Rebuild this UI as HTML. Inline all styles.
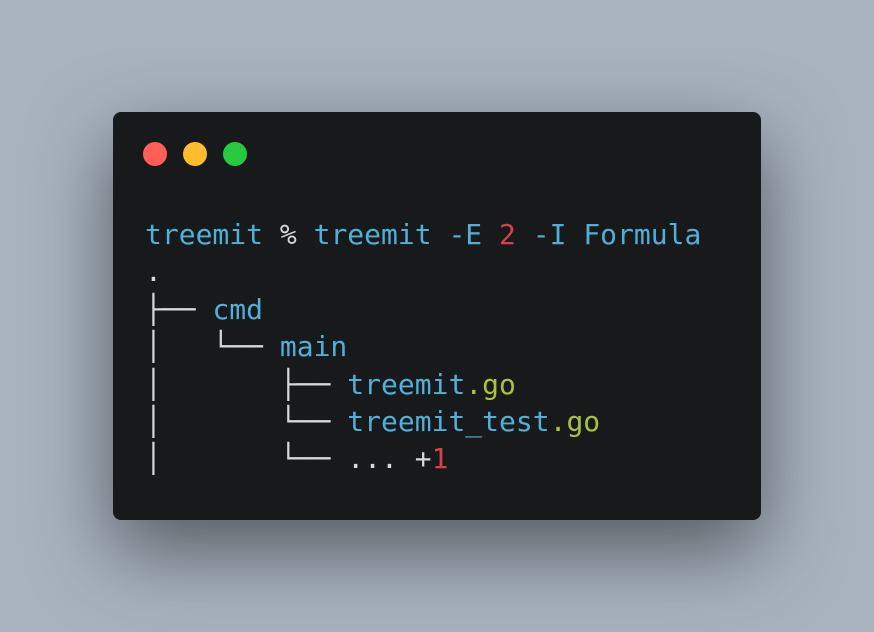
<!DOCTYPE html>
<html><head><style>
html,body{margin:0;padding:0;width:874px;height:632px;overflow:hidden;background:#a8b3bf}
.card{position:absolute;left:113px;top:112px;width:648px;height:408px;background:#18191b;border-radius:8px;box-shadow:0 30px 80px rgba(0,0,0,0.5)}
.dot{position:absolute;top:30px;width:24px;height:24px;border-radius:50%}
pre{position:absolute;left:32px;top:104px;margin:0;font-family:"DejaVu Sans Mono","Liberation Mono",monospace;font-size:28px;line-height:37.4px;color:#d8d8d8}
.b{color:#4fb0d8}.r{color:#d9414a}.g{color:#a8c23f}
</style></head><body>
<div class="card">
<div class="dot" style="left:30px;background:#ff5f56"></div>
<div class="dot" style="left:70px;background:#ffbd2e"></div>
<div class="dot" style="left:110px;background:#27c93f"></div>
<pre><span class="b">treemit</span> % <span class="b">treemit -E</span> <span class="r">2</span> <span class="b">-I Formula</span>
.
├── <span class="b">cmd</span>
│   └── <span class="b">main</span>
│       ├── <span class="b">treemit</span><span class="g">.go</span>
│       └── <span class="b">treemit_test</span><span class="g">.go</span>
│       └── ... +<span class="r">1</span></pre>
</div>
</body></html>
